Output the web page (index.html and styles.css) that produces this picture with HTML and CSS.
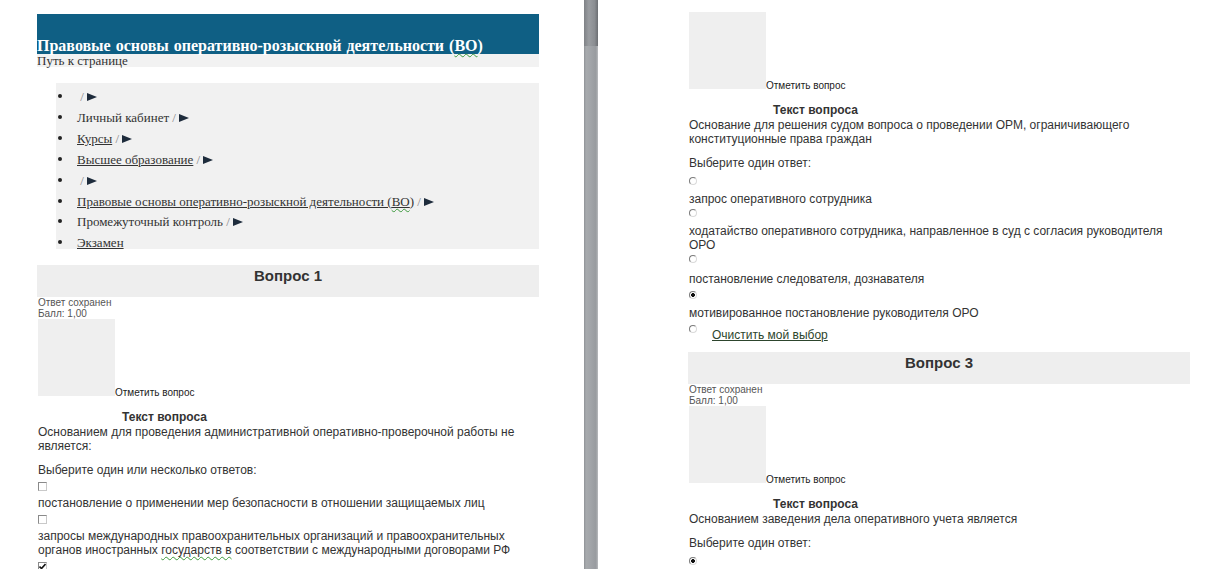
FILE: index.html
```html
<!DOCTYPE html>
<html lang="ru">
<head>
  <meta charset="UTF-8">
  <title>Экзамен</title>
  <link rel="stylesheet" href="styles.css">
</head>
<body>
  <div class="screen">
    <!-- left window: course header, breadcrumbs, question 1 -->
    <div class="pane pane-left">
      <div class="course-head">
        <h1>Правовые основы оперативно-розыскной деятельности (<span class="spell">ВО</span>)</h1>
      </div>
      <div class="path-label">Путь к странице</div>
      <ul class="crumbs">
        <li>&nbsp;<span class="sep">/</span> <span class="arrow"></span></li>
        <li>Личный кабинет <span class="sep">/</span> <span class="arrow"></span></li>
        <li><a href="#">Курсы</a> <span class="sep">/</span> <span class="arrow"></span></li>
        <li><a href="#">Высшее образование</a> <span class="sep">/</span> <span class="arrow"></span></li>
        <li>&nbsp;<span class="sep">/</span> <span class="arrow"></span></li>
        <li><a href="#">Правовые основы оперативно-розыскной деятельности (<span class="spell">ВО</span>)</a> <span class="sep">/</span> <span class="arrow"></span></li>
        <li>Промежуточный контроль <span class="sep">/</span> <span class="arrow"></span></li>
        <li><a href="#">Экзамен</a></li>
      </ul>

      <div class="que">
        <div class="que-head"><h3>Вопрос 1</h3></div>
        <div class="que-body">
          <div class="que-state">Ответ сохранен</div>
          <div class="que-state">Балл: 1,00</div>
          <div class="que-flag"><span class="flag-box"></span>Отметить вопрос</div>
          <div class="qtext-title">Текст вопроса</div>
          <div class="qtext">Основанием для проведения административной оперативно-проверочной работы не является:</div>
          <div class="prompt">Выберите один или несколько ответов:</div>
          <div class="answer">
            <span class="cb"></span>
            <div class="opt-text">постановление о применении мер безопасности в отношении защищаемых лиц</div>
            <span class="cb"></span>
            <div class="opt-text">запросы международных правоохранительных организаций и правоохранительных органов иностранных <span class="spell">государств в</span> соответствии с международными договорами РФ</div>
            <span class="cb checked"><svg width="7" height="7" viewBox="0 0 7 7"><path d="M0.5 3.5 L2.5 5.5 L6.5 1" fill="none" stroke="#111" stroke-width="1.6"/></svg></span>
          </div>
        </div>
      </div>
    </div>

    <div class="scrollbar"><div class="scroll-thumb"></div></div>

    <!-- right window: end of question 2, question 3 -->
    <div class="pane pane-right">
      <div class="que-body">
        <div class="que-flag"><span class="flag-box"></span>Отметить вопрос</div>
        <div class="qtext-title">Текст вопроса</div>
        <div class="qtext">Основание для решения судом вопроса о проведении ОРМ, ограничивающего конституционные права граждан</div>
        <div class="prompt">Выберите один ответ:</div>
        <div class="answer radios">
          <span class="rb"></span>
          <div class="opt-text">запрос оперативного сотрудника</div>
          <span class="rb"></span>
          <div class="opt-text">ходатайство оперативного сотрудника, направленное в суд с согласия руководителя ОРО</div>
          <span class="rb rb-wide"></span>
          <div class="opt-text">постановление следователя, дознавателя</div>
          <span class="rb checked rb-gap"></span>
          <div class="opt-text">мотивированное постановление руководителя ОРО</div>
          <div class="clear-row">
            <span class="rb"></span>
            <a class="clear-link" href="#">Очистить мой выбор</a>
          </div>
        </div>
      </div>

      <div class="que que-next">
        <div class="que-head"><h3>Вопрос 3</h3></div>
        <div class="que-body">
          <div class="que-state">Ответ сохранен</div>
          <div class="que-state">Балл: 1,00</div>
          <div class="que-flag"><span class="flag-box"></span>Отметить вопрос</div>
          <div class="qtext-title">Текст вопроса</div>
          <div class="qtext">Основанием заведения дела оперативного учета является</div>
          <div class="prompt">Выберите один ответ:</div>
          <div class="answer radios">
            <span class="rb checked"></span>
          </div>
        </div>
      </div>
    </div>
  </div>
</body>
</html>
```

FILE: styles.css
```css
* {
  margin: 0;
  padding: 0;
  box-sizing: border-box;
}

html, body {
  height: 100%;
}

body {
  font-family: "Liberation Sans", Arial, sans-serif;
  font-size: 12px;
  color: #333;
  background-color: #fff;
  overflow: hidden;
}

.screen {
  display: flex;
  height: 569px;
}

.pane {
  overflow: hidden;
}

.pane-left {
  width: 584px;
  padding-left: 37px;
}

.pane-left > * {
  width: 502px;
}

.pane-right {
  flex: 1;
  padding: 12px 0 0 90px;
}

.pane-right > * {
  width: 502px;
}

/* fake window scrollbar between the two windows */
.scrollbar {
  width: 14px;
  flex-shrink: 0;
  background: linear-gradient(to right, #8f9296 0, #a7aaad 2px, #a2a5a9 45%, #989b9f 85%, #b9bbbe 100%);
}

.scroll-thumb {
  height: 46px;
  background: linear-gradient(to right, #7f8286 0, #9a9da1 35%, #8b8e92 75%, #6c6f73 100%);
}

.spell {
  text-decoration: underline wavy #3c9a3c;
  text-decoration-thickness: 1px;
  text-underline-offset: 2px;
}

/* course header */
.course-head {
  margin-top: 14px;
  height: 40px;
  background-color: #0f5f84;
  display: flex;
  align-items: flex-end;
}

.course-head h1 {
  font-family: "Liberation Serif", "Times New Roman", serif;
  font-size: 16px;
  line-height: 17px;
  color: #fff;
  white-space: nowrap;
  word-spacing: 1px;
}

.path-label {
  font-family: "Liberation Serif", "Times New Roman", serif;
  font-size: 13px;
  line-height: 13px;
  height: 13px;
  background-color: #f2f2f2;
}

/* breadcrumbs */
.crumbs {
  margin: 16px 0 0 19px;
  width: 483px !important;
  height: 166px;
  padding: 4px 0 0 21px;
  background-color: #f1f1f1;
  font-family: "Liberation Serif", "Times New Roman", serif;
  font-size: 13px;
  line-height: 20.9px;
  list-style: none;
  overflow: hidden;
}

.crumbs li::before {
  content: "";
  display: inline-block;
  width: 4px;
  height: 4px;
  margin: 0 15px 0 -19px;
  border-radius: 50%;
  background-color: #222;
  vertical-align: 3px;
}

.crumbs a {
  color: #333;
}

.crumbs .sep {
  color: #888;
}

.arrow {
  display: inline-block;
  width: 0;
  height: 0;
  border-left: 10px solid #1e2c3c;
  border-top: 4px solid transparent;
  border-bottom: 4px solid transparent;
}

/* questions */
.que {
  margin-top: 16px;
}

.que-next {
  margin-top: 10px;
}

.que-head {
  height: 32px;
  padding-top: 2px;
  background-color: #eeeeee;
  text-align: center;
}

.que-head h3 {
  font-size: 15px;
  line-height: 18px;
  font-weight: bold;
  color: #333;
}

.que-body {
  padding-left: 1px;
}

.que-state {
  font-size: 10px;
  line-height: 11px;
  color: #555;
}

.que-flag {
  font-size: 10px;
  line-height: 11px;
  color: #222;
}

.flag-box {
  display: inline-block;
  width: 77px;
  height: 77px;
  background-color: #efefef;
}

.qtext-title {
  margin: 12px 0 0 84px;
  font-size: 12px;
  line-height: 14px;
  font-weight: bold;
}

.qtext {
  margin-top: 1px;
  line-height: 14px;
}

.prompt {
  margin-top: 10px;
  line-height: 14px;
}

.answer .opt-text {
  line-height: 14px;
}

/* old style form controls */
.cb,
.rb {
  display: block;
  width: 9px;
  height: 9px;
  margin: 5px 0;
  background-color: #fff;
  border: 1px solid #8a8a8a;
  border-right-color: #c9c9c9;
  border-bottom-color: #c9c9c9;
}

.cb.checked {
  display: flex;
  align-items: center;
  justify-content: center;
}

.rb {
  width: 8px;
  height: 8px;
  margin: 3px 0 7px;
  border-radius: 50%;
  border-color: #7b7b7b #dadada #dadada #7b7b7b;
}

.radios > .rb:first-child {
  margin-top: 7px;
}

.rb.rb-wide {
  margin-bottom: 9px;
}

.rb.rb-gap {
  margin-top: 5px;
}

.rb.checked {
  background: radial-gradient(circle, #111 0, #111 1.6px, #fff 2.2px);
}

.clear-row {
  display: flex;
  align-items: flex-start;
}

.clear-row .rb {
  margin: 5px 0 0;
}

.clear-link {
  margin: 8px 0 0 15px;
  line-height: 14px;
  color: #2d452d;
}
```
